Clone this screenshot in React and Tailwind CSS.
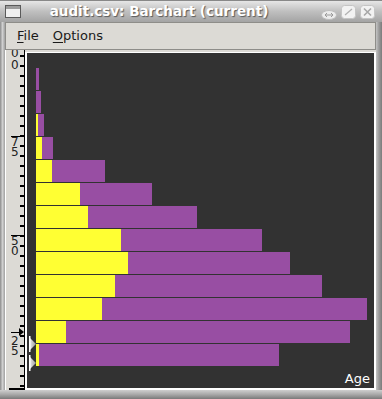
import React from 'react';

// [yellow width, total width] in px, measured from the bar origin
const bars = [
  [0, 3], [0, 5], [2, 8], [6, 17], [16, 69], [44, 116], [52, 161],
  [85, 226], [92, 254], [79, 286], [66, 331], [30, 314], [3, 243],
];

const ticks = Array.from({ length: 34 }, (_, i) => 5 + i * 10);

const rulerLabels = [
  ['0', 7], ['0', 19], ['7', 96], ['5', 106], ['5', 195], ['0', 205], ['2', 295], ['5', 305],
];

function Ruler() {
  return (
    <svg width="20" height="340" className="block">
      {ticks.map((y) => (
        <rect key={y} x="14" y={y} width="4" height="2" fill="#000" />
      ))}
      <rect x="18" y="0" width="2" height="340" fill="#000" />
      <rect x="3" y="338" width="17" height="2" fill="#000" />
      <rect x="5" y="86" width="9" height="1" fill="#000" />
      <rect x="5" y="185" width="9" height="1" fill="#000" />
      <rect x="5" y="282" width="9" height="1" fill="#000" />
      <polygon points="13,278 18,282 13,286" fill="#000" />
      {rulerLabels.map(([t, y], i) => (
        <text key={i} x="5" y={y} fontSize="12" fill="#222" fontFamily="DejaVu Sans, sans-serif">
          {t}
        </text>
      ))}
    </svg>
  );
}

function Slider() {
  return (
    <svg width="8" height="16" className="block">
      <defs>
        <linearGradient id="sl" x1="0" x2="1" y1="0" y2="0">
          <stop offset="0" stopColor="#f4f4f4" />
          <stop offset="1" stopColor="#9a9a9a" />
        </linearGradient>
      </defs>
      <polygon points="0,1 7,8 0,15" fill="url(#sl)" />
      <rect x="0" y="0" width="1.5" height="16" fill="#fff" />
    </svg>
  );
}

function TitleButtons() {
  return (
    <div className="flex items-center gap-[4px]">
      <svg width="16" height="10" className="mt-[6px]">
        <ellipse cx="8" cy="5" rx="7.5" ry="4.5" fill="#ececec" stroke="#bdbdbd" />
        <path d="M4 5h8M4 5l2-2M4 5l2 2M12 5l-2-2M12 5l-2 2" stroke="#9a9a9a" strokeWidth="1" fill="none" />
      </svg>
      <svg width="15" height="14">
        <rect x="0.5" y="0.5" width="14" height="13" rx="3" fill="#f2f2f2" stroke="#c4c4c4" />
        <path d="M4 10l7-6" stroke="#b0b0b0" strokeWidth="1.2" />
      </svg>
      <svg width="15" height="14">
        <rect x="0.5" y="0.5" width="14" height="13" rx="3" fill="#f2f2f2" stroke="#c4c4c4" />
        <path d="M4 3.5l7 7M11 3.5l-7 7" stroke="#a8a8a8" strokeWidth="1.6" />
      </svg>
    </div>
  );
}

export default function App() {
  return (
    <div className="w-[382px] h-[399px] flex flex-col bg-[#b0b0b0] overflow-hidden font-['DejaVu_Sans',sans-serif]">
      {/* title bar */}
      <div className="h-[22px] flex items-center pl-[5px] pr-[7px] bg-gradient-to-b from-[#e6e6e6] via-[#bfbfbf] to-[#a4a4a4] border-t border-[#888]">
        <svg width="16" height="13" className="block">
          <rect x="0.5" y="0.5" width="15" height="12" fill="#f0f0f0" stroke="#5a5a5a" />
          <rect x="1" y="1" width="14" height="3" fill="#9c9c9c" />
        </svg>
        <div className="flex-1 text-center text-white font-bold text-[13.5px] leading-none [text-shadow:1px_1px_1px_#5a5a5a] -ml-[24px]">
          audit.csv: Barchart (current)
        </div>
        <TitleButtons />
      </div>

      <div className="flex-1 flex">
        {/* left frame */}
        <div className="w-[5px] bg-gradient-to-r from-[#8c8c8c] via-[#d0d0d0] to-[#a0a0a0]" />

        <div className="w-[371px] flex flex-col bg-[#dcdad5]">
          {/* menu bar */}
          <div className="h-[28px] flex items-center gap-[14px] pl-[11px] border border-[#8e8d89] bg-[#dcdad5] text-[13px] text-[#1a1a1a]">
            <span>
              <span className="underline underline-offset-2">F</span>ile
            </span>
            <span>
              <span className="underline underline-offset-2">O</span>ptions
            </span>
          </div>

          {/* main area */}
          <div className="h-[340px] flex">
            <div className="w-[20px] bg-[#dcdad5] border-l border-white">
              <Ruler />
            </div>
            <div className="flex-1 flex flex-col pt-[2px] bg-[#dcdad5]">
              <div className="h-[1px] bg-white" />
              <div className="flex-1 flex border-l-2 border-r-2 border-b-2 border-white">
                <div className="relative flex-1 flex flex-col bg-[#323232] pt-[15px] pl-[9px] pr-[4px] pb-[3px]">
                  <div className="flex flex-col gap-[1px]">
                    {bars.map(([y, t], i) => (
                      <div key={i} className="h-[22px] flex">
                        <div className="bg-[#ffff33]" style={{ width: y }} />
                        <div className="bg-[#984ea3]" style={{ width: t - y }} />
                      </div>
                    ))}
                  </div>
                  <div className="flex-1" />
                  <div className="self-end text-white text-[13px] leading-none">Age</div>
                  <div className="absolute left-[2px] top-[283px]">
                    <Slider />
                  </div>
                  <div className="absolute left-[2px] top-[302px]">
                    <Slider />
                  </div>
                </div>
              </div>
            </div>
          </div>
        </div>

        {/* right frame */}
        <div className="w-[6px] bg-gradient-to-r from-[#c4c4c4] via-[#9a9a9a] to-[#7c7c7c]" />
      </div>

      {/* bottom frame */}
      <div className="h-[9px] bg-gradient-to-b from-[#cfcfcf] via-[#a8a8a8] to-[#7a7a7a]" />
    </div>
  );
}
